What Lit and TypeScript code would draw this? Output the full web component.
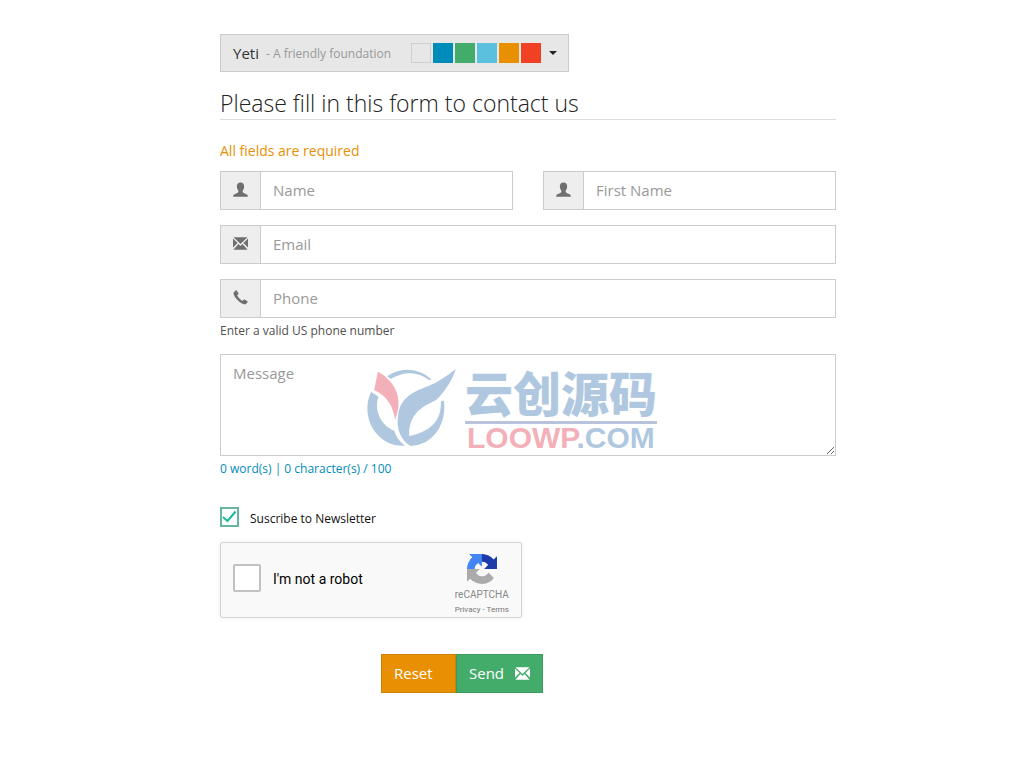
import { LitElement, html, css } from "lit";
import { customElement, state } from "lit/decorators.js";

const userIcon = html`<svg class="icon" viewBox="0 0 16 16" aria-hidden="true">
  <path d="M8 0.4C10.8 .4 12 2.2 11.9 4.8C11.8 6.9 11.1 8 10.3 9.2V10.6C10.4 11.4 13 12.2 14.4 13C15.6 13.6 15.8 14.2 15.8 15.8H.2C.2 14.2 .4 13.6 1.6 13C3 12.2 5.6 11.4 5.7 10.6V9.2C4.9 8 4.2 6.9 4.1 4.8C4 2.2 5.2 .4 8 .4Z"/>
</svg>`;

const mailIcon = html`<svg class="icon" viewBox="0 0 16 16" aria-hidden="true">
  <path d="M.6 1.2H15.4L8 8.6ZM0 2.6L4.9 7.5L0 12.3ZM16 2.6V12.3L11.1 7.5ZM5.9 8.6L8 10.7L10.1 8.6L15.6 14.6H.4Z"/>
</svg>`;

const phoneIcon = html`<svg class="icon" viewBox="0 0 16 16" aria-hidden="true">
  <path d="M.7 2.6L2.8 .5C3.2 .2 3.7 .2 4 .6L5.8 3.4C6 3.8 5.9 4.2 5.6 4.5L4.5 5.6C5 7.4 8.4 10.8 10.3 11.5L11.4 10.4C11.7 10.1 12.1 10 12.5 10.2L15.3 12C15.7 12.3 15.8 12.8 15.4 13.2L13.4 15.3C9.6 16.5 -.8 6.8 .7 2.6Z"/>
</svg>`;

const captchaLogo = html`<svg class="captcha-logo" viewBox="0 0 64 64" aria-hidden="true">
  <path fill="#1c3aa9" d="M64 31.955l-.033-1.37V4.687l-7.16 7.16C50.948 4.674 42.033.093 32.05.093c-10.4 0-19.622 4.96-25.458 12.64l11.736 11.86a15.55 15.55 0 0 1 4.754-5.334c2.05-1.6 4.952-2.906 8.968-2.906.485 0 .86.057 1.135.163 4.976.393 9.288 3.14 11.828 7.124l-8.307 8.307L64 31.953"/>
  <path fill="#4285f4" d="M31.862.094l-1.37.033H4.594l7.16 7.16C4.58 13.147 0 22.06 0 32.046c0 10.4 4.96 19.622 12.64 25.458L24.5 45.768a15.55 15.55 0 0 1-5.334-4.754c-1.6-2.05-2.906-4.952-2.906-8.968 0-.485.057-.86.163-1.135.393-4.976 3.14-9.288 7.124-11.828l8.307 8.307L31.86.095"/>
  <path fill="#ababab" d="M.001 32.045l.033 1.37v25.898l7.16-7.16c5.86 7.173 14.774 11.754 24.76 11.754 10.4 0 19.622-4.96 25.458-12.64l-11.736-11.86a15.55 15.55 0 0 1-4.754 5.334c-2.05 1.6-4.952 2.906-8.968 2.906-.485 0-.86-.057-1.135-.163-4.976-.393-9.288-3.14-11.828-7.124l8.307-8.307L0 32.044"/>
</svg>`;

const leafLogo = html`<svg class="brand-logo" viewBox="34 24 270 237" aria-hidden="true">
  <path fill="#f4b0b8" d="M68 35C98 50 128 84 130 122C131 145 126 162 120 180C115 143 98 108 57 90Z"/>
  <g fill="#b0c8df">
    <path d="M96 49C134 20 192 22 229 59L223 61C188 34 148 32 107 57Z"/>
    <path d="M48 95C30 130 33 182 60 216C84 246 112 259 150 257C135 246 123 232 118 213C78 196 55 152 70 110Z"/>
    <path d="M302 27C292 58 270 95 243 120C214 136 160 152 162 228C222 216 260 184 257 125L266 121C276 188 237 256 166 258C136 240 122 204 129 164C136 114 172 96 218 79C250 66 278 45 302 27Z"/>
  </g>
</svg>`;

const swatches = ["pale", "blue", "green", "sky", "amber", "red"];

@customElement("app-root")
class AppRoot extends LitElement {
  @state() private message = "";

  static styles = css`
    :host {
      display: block;
      font-family: "Open Sans", sans-serif;
      font-size: 15px;
      line-height: 21px;
      color: #222;
    }
    * { box-sizing: border-box; }
    button, input, textarea { font: inherit; border-radius: 0; margin: 0; }
    .page { padding: 34px 188px 40px 220px; }
    .theme {
      display: flex;
      align-items: center;
      height: 38px;
      padding: 0 11px 0 12px;
      background: #e7e7e7;
      border: 1px solid #cbcbcb;
      color: #333;
    }
    .tagline { font-size: 12px; color: #999; margin: 0 20px 0 7px; }
    .swatches { display: flex; gap: 2px; }
    .swatch { width: 20px; height: 20px; }
    .pale { background: #e7e7e7; border: 1px solid #cfcfcf; }
    .blue { background: #008cba; }
    .green { background: #43ac6a; }
    .sky { background: #5bc0de; }
    .amber { background: #e99002; }
    .red { background: #f04124; }
    .caret {
      margin-left: 8px;
      border: 4px solid transparent;
      border-top-color: #222;
      border-bottom: 0;
    }
    h1 {
      margin: 15px 0 20px;
      font-size: 23px;
      line-height: 32px;
      font-weight: 350;
      border-bottom: 1px solid #ddd;
    }
    .notice { margin: 0 0 10px; color: #e99002; font-size: 14px; }
    .fields {
      display: grid;
      grid-template-columns: 1fr 1fr;
      gap: 15px 30px;
    }
    .wide { grid-column: 1 / -1; }
    .group {
      display: flex;
      height: 39px;
      border: 1px solid #ccc;
      background: #fff;
    }
    .addon {
      flex: none;
      display: grid;
      place-items: center;
      width: 40px;
      padding-bottom: 2px;
      background: #eee;
      border-right: 1px solid #ccc;
      color: #6f6f6f;
    }
    .icon { width: 15px; height: 15px; fill: currentColor; display: block; }
    .group input {
      flex: 1;
      min-width: 0;
      border: 0;
      padding: 0 12px;
      background: none;
      color: #6f6f6f;
    }
    ::placeholder { color: #999; opacity: 1; }
    .help { margin: 3px 0 13px; font-size: 12px; line-height: 20px; color: #505050; }
    .message { position: relative; display: flex; }
    textarea {
      width: 100%;
      height: 102px;
      padding: 8px 12px;
      border: 1px solid #ccc;
      background: #fff;
      resize: vertical;
    }
    .brand {
      position: absolute;
      left: 146px;
      top: 14px;
      display: flex;
      gap: 8px;
      pointer-events: none;
    }
    .brand-logo { width: 91px; height: 79px; }
    .brand-text { color: #b0c8df; white-space: nowrap; }
    .brand-cn {
      font: 900 48px/46px "Noto Sans CJK SC", sans-serif;
      padding-bottom: 7px;
      border-bottom: 3px solid #b9c4dc;
    }
    .brand-en { font: 700 30px/28px "Liberation Sans", sans-serif; padding-left: 2px; }
    .pink { color: #f4b0b8; }
    .counter { margin: 3px 0 28px; font-size: 12px; line-height: 20px; color: #008cba; }
    .newsletter {
      display: flex;
      align-items: center;
      gap: 11px;
      width: fit-content;
      height: 20px;
      font-size: 12px;
      line-height: 20px;
      color: #111;
    }
    .newsletter-text { padding-top: 3px; }
    .tick { display: grid; width: 19px; height: 20px; }
    .tick > * { grid-area: 1 / 1; }
    .tick input {
      appearance: none;
      width: 19px;
      height: 20px;
      border: 2px solid #66b5a0;
      background: #fff;
    }
    .tick svg {
      width: 19px;
      height: 20px;
      fill: none;
      stroke: #1abc9c;
      stroke-width: 2;
      pointer-events: none;
      visibility: hidden;
    }
    .tick input:checked + svg { visibility: visible; }
    .captcha {
      display: flex;
      justify-content: space-between;
      width: 302px;
      height: 76px;
      margin: 15px 0 36px;
      padding: 0 12px;
      background: #f9f9f9;
      border: 1px solid #d3d3d3;
      border-radius: 3px;
      box-shadow: 0 0 4px rgba(0, 0, 0, 0.08);
      font-family: Roboto, sans-serif;
    }
    .robot { display: flex; align-items: center; gap: 12px; font-size: 14px; color: #000; height: 70px; }
    .robot span { padding-top: 2px; }
    .robot input {
      appearance: none;
      width: 28px;
      height: 28px;
      border: 2px solid #c1c1c1;
      border-radius: 2px;
      background: #fff;
    }
    .captcha-side {
      display: flex;
      flex-direction: column;
      align-items: center;
      padding-top: 11px;
      color: #777;
      font-size: 8px;
    }
    .captcha-logo { width: 30px; height: 30px; }
    .captcha-name { font-size: 10px; line-height: 22px; color: #888; }
    .captcha-side a { color: inherit; text-decoration: none; }
    .captcha-links { line-height: 8px; }
    .actions { display: flex; margin-left: 161px; }
    .actions button {
      display: flex;
      align-items: center;
      height: 39px;
      padding: 0 12px;
      border: 1px solid;
      color: #fff;
    }
    .actions .reset { width: 75px; background: #e99002; border-color: #d08002; }
    .actions .send { width: 87px; justify-content: space-between; background: #43ac6a; border-color: #3c9a5f; }
  `;

  private get counter() {
    const text = this.message.trim();
    const words = text ? text.split(/\s+/).length : 0;
    return `${words} word(s) | ${this.message.length} character(s) / 100`;
  }

  private field(label: string, type: string, icon: unknown, wide = false) {
    const id = label.toLowerCase().replace(" ", "-");
    return html`<div class="group ${wide ? "wide" : ""}">
      <label class="addon" for=${id} aria-label=${label}>${icon}</label>
      <input id=${id} type=${type} placeholder=${label} />
    </div>`;
  }

  render() {
    return html`<main class="page">
      <button class="theme" type="button" aria-haspopup="listbox">
        <span>Yeti</span><span class="tagline">- A friendly foundation</span>
        <span class="swatches">${swatches.map((s) => html`<span class="swatch ${s}"></span>`)}</span>
        <span class="caret"></span>
      </button>
      <h1>Please fill in this form to contact us</h1>
      <form @submit=${(e: Event) => e.preventDefault()} @reset=${() => (this.message = "")}>
        <p class="notice">All fields are required</p>
        <div class="fields">
          ${this.field("Name", "text", userIcon)}
          ${this.field("First Name", "text", userIcon)}
          ${this.field("Email", "email", mailIcon, true)}
          ${this.field("Phone", "tel", phoneIcon, true)}
        </div>
        <p class="help">Enter a valid US phone number</p>
        <div class="message">
          <textarea
            aria-label="Message"
            placeholder="Message"
            maxlength="100"
            @input=${(e: Event) => (this.message = (e.target as HTMLTextAreaElement).value)}
          ></textarea>
          <div class="brand">
            ${leafLogo}
            <div class="brand-text">
              <div class="brand-cn" lang="zh-CN">云创源码</div>
              <div class="brand-en"><span class="pink">LOOWP</span>.COM</div>
            </div>
          </div>
        </div>
        <p class="counter">${this.counter}</p>
        <label class="newsletter">
          <span class="tick">
            <input type="checkbox" checked />
            <svg viewBox="0 0 19 20" aria-hidden="true"><path d="M3 10L7.5 14L15.5 4.5"/></svg>
          </span>
          <span class="newsletter-text">Suscribe to Newsletter</span>
        </label>
        <div class="captcha">
          <label class="robot"><input type="checkbox" /><span>I'm not a robot</span></label>
          <div class="captcha-side">
            ${captchaLogo}
            <span class="captcha-name">reCAPTCHA</span>
            <span class="captcha-links"><a href="#privacy">Privacy</a> - <a href="#terms">Terms</a></span>
          </div>
        </div>
        <div class="actions">
          <button class="reset" type="reset">Reset</button>
          <button class="send" type="submit"><span>Send</span>${mailIcon}</button>
        </div>
      </form>
    </main>`;
  }
}
